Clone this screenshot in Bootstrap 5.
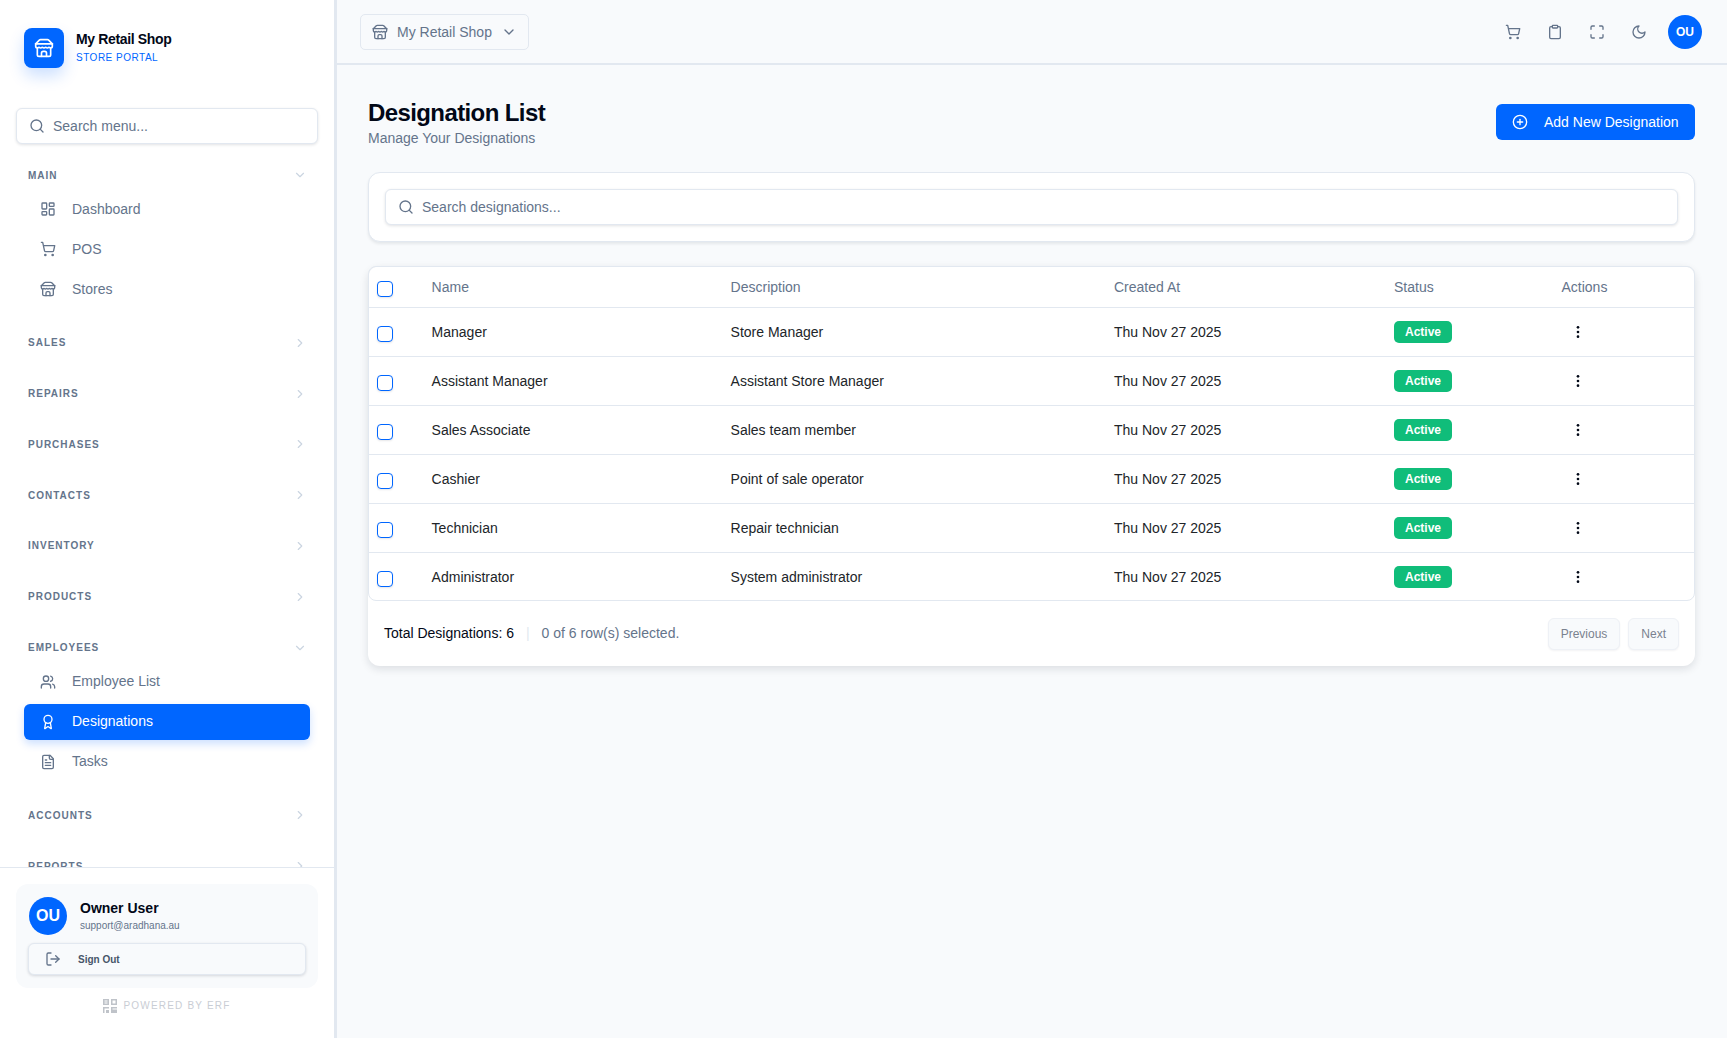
<!DOCTYPE html>
<html lang="en">
<head>
<meta charset="UTF-8">
<meta name="viewport" content="width=device-width, initial-scale=1">
<title>Designation List</title>
<link href="https://cdn.jsdelivr.net/npm/bootstrap@5.3.3/dist/css/bootstrap.min.css" rel="stylesheet">
<style>
  body { background: #f8fafc; color: #020817; font-family: "Liberation Sans", Arial, sans-serif; font-size: 14px; overflow: hidden; }
  .ico { width: 16px; height: 16px; fill: none; stroke: currentColor; stroke-width: 2; stroke-linecap: round; stroke-linejoin: round; flex-shrink: 0; }

  /* sidebar */
  .side-panel { width: 337px; height: 100vh; background: #fff; border-right: 3px solid #e2e8f0; flex-shrink: 0; }
  .brand-box { padding: 28px 24px 0; flex-shrink: 0; }
  .brand-logo { width: 40px; height: 40px; border-radius: 8px; background: #0066ff; color: #fff; box-shadow: 0 8px 16px rgba(0,102,255,.2); }
  .brand-logo .ico { width: 20px; height: 20px; }
  .brand-name { font-size: 14px; font-weight: 700; line-height: 18px; letter-spacing: -.35px; color: #020817; margin-top: -1px; }
  .brand-tag { font-size: 10px; letter-spacing: .5px; color: #0066ff; line-height: 14px; margin-top: 3px; }
  .side-search { margin: 40px 16px 0; height: 36px; flex-shrink: 0; }
  .field-box { border: 1px solid #e2e8f0; border-radius: 6px; background: #fff; box-shadow: 0 1px 3px rgba(15,23,42,.12); color: #64748b; padding-left: 12px; gap: 8px; }
  .field-box input { border: 0; outline: 0; background: transparent; font-size: 14px; width: 100%; color: #020817; padding: 0; }
  .field-box input::placeholder { color: #64748b; opacity: 1; }
  .side-nav { overflow: hidden; padding-top: 21px; min-height: 0; }
  .side-group { padding-bottom: 25.8px; }
  .side-head { height: 20px; margin-bottom: 5px; padding: 0 27px 0 28px; font-size: 10px; font-weight: 700; letter-spacing: 1px; color: #64748b; }
  .side-head .ico { width: 14px; height: 14px; color: #cbd5e1; }
  .side-list { padding-top: 1px; gap: 4px; }
  .side-item { height: 36px; margin: 0 24px; padding-left: 16px; gap: 16px; border-radius: 6px; color: #64748b; font-size: 14px; text-decoration: none; }
  .side-item.is-on { background: #0066ff; color: #fff; box-shadow: 0 4px 8px rgba(0,102,255,.2); }
  .side-foot { border-top: 1px solid #e2e8f0; padding: 16px 16px 0; height: 171px; flex-shrink: 0; }
  .user-card { background: #f8fafc; border-radius: 12px; padding: 13px 12px 12px; height: 104px; }
  .user-pic { width: 38px; height: 38px; border-radius: 50%; background: #0066ff; color: #fff; font-weight: 700; font-size: 16px; flex-shrink: 0; margin-left: 1px; margin-right: 1px; }
  .user-name { font-size: 14px; font-weight: 700; line-height: 18px; }
  .user-mail { font-size: 10px; color: #64748b; line-height: 14px; margin-top: 2px; }
  .sign-btn { height: 32px; margin-top: 8px; padding: 0 0 0 16px; gap: 17px; width: 100%; font-size: 10px; font-weight: 700; color: #475569; background: #f8fafc; border: 1px solid #e2e8f0; border-radius: 6px; box-shadow: 0 1px 3px rgba(15,23,42,.15); }
  .sign-btn .ico { color: #64748b; }
  .powered { margin-top: 10px; font-size: 10px; letter-spacing: 1.2px; color: #c9cdd4; gap: 6px; }

  /* top bar */
  .top-bar { height: 65px; border-bottom: 2px solid #e2e8f0; padding: 0 25px 0 23px; flex-shrink: 0; }
  .shop-pick { height: 36px; width: 169px; padding: 0 13px 0 11px; gap: 9px; color: #64748b; background: #f8fafc; border: 1px solid #e2e8f0; border-radius: 5px; font-size: 14px; white-space: nowrap; }
  .shop-pick span { margin-top: 2px; }
  .top-icons { gap: 26px; color: #64748b; }
  .top-pic { width: 34px; height: 34px; border-radius: 50%; background: #0066ff; color: #fff; font-size: 12px; font-weight: 700; margin-left: -5px; }

  /* page */
  .page-wrap { padding: 35px 32px 0 31px; }
  .page-title { font-size: 24px; font-weight: 700; line-height: 28px; letter-spacing: -.6px; margin: -1px 0 0; color: #020817; }
  .page-sub { color: #64748b; font-size: 14px; line-height: 18px; margin-top: 2px; }
  .add-btn { width: 199px; height: 36px; padding: 0 0 0 16px; gap: 16px; background: #0066ff; border: 0; border-radius: 6px; font-size: 14px; color: #fff; margin-top: 4px; }
  .add-btn .ico { width: 16px; height: 16px; }
  .box-card { background: #fff; border: 1px solid #e2e8f0; border-radius: 12px; box-shadow: 0 2px 3px rgba(15,23,42,.08); }
  .filter-card { height: 70px; margin-top: 25px; padding: 16px; }
  .filter-card .field-box { height: 36px; }
  .list-card { margin-top: 24px; height: 400px; box-shadow: 0 3px 8px rgba(15,23,42,.12); border: 0; }
  .tbl-shell { border: 1px solid #e2e8f0; border-radius: 8px; overflow: hidden; height: 335px; }
  .tbl-main { table-layout: fixed; width: 100%; margin: 0; --bs-table-bg: transparent; }
  .tbl-main th, .tbl-main td { padding: 0 8px; vertical-align: middle; border-bottom: 1px solid #e2e8f0; font-size: 14px; height: 49px; }
  .tbl-main tr:last-child td { border-bottom: 0; }
  .tbl-main th { font-weight: 400; color: #64748b; height: 40px; }
  .tbl-main th:nth-child(n+2), .tbl-main td:nth-child(-n+4):nth-child(n+2) { padding-top: 2px; }
  .tick-box.form-check-input { width: 16px; height: 16px; margin: 5px 0 0; border: 1px solid #0066ff; border-radius: 4px; box-shadow: 0 1px 2px rgba(15,23,42,.1); display: block; }
  .state-tag { display: flex; align-items: center; justify-content: center; width: 58px; height: 22px; background: #10bd7a; color: #fff; font-size: 12px; font-weight: 700; border-radius: 5px; }
  .more-ico { width: 16px; height: 16px; margin-left: 9px; fill: #020817; display: block; }
  .tbl-foot { height: 65px; padding: 0 16px 0 16px; }
  .sep-bar { color: #e2e8f0; margin: 0 12px; }
  .muted-txt { color: #64748b; }
  .page-btn { height: 32px; padding: 0 12px; font-size: 12px; color: #7a828f; background: #f8fafc; border: 1px solid #eef1f6; border-radius: 6px; box-shadow: 0 1px 2px rgba(15,23,42,.05); }
</style>
</head>
<body>

<svg width="0" height="0" class="position-absolute">
  <symbol id="i-store" viewBox="0 0 24 24"><path d="m2 7 4.41-4.41A2 2 0 0 1 7.83 2h8.34a2 2 0 0 1 1.42.59L22 7"/><path d="M4 12v8a2 2 0 0 0 2 2h12a2 2 0 0 0 2-2v-8"/><path d="M15 22v-4a2 2 0 0 0-2-2h-2a2 2 0 0 0-2 2v4"/><path d="M2 7h20"/><path d="M22 7v3a2 2 0 0 1-2 2a2.7 2.7 0 0 1-1.59-.63.7.7 0 0 0-.82 0A2.7 2.7 0 0 1 16 12a2.7 2.7 0 0 1-1.59-.63.7.7 0 0 0-.82 0A2.7 2.7 0 0 1 12 12a2.7 2.7 0 0 1-1.59-.63.7.7 0 0 0-.82 0A2.7 2.7 0 0 1 8 12a2.7 2.7 0 0 1-1.59-.63.7.7 0 0 0-.82 0A2.7 2.7 0 0 1 4 12a2 2 0 0 1-2-2V7"/></symbol>
  <symbol id="i-search" viewBox="0 0 24 24"><circle cx="11" cy="11" r="8"/><path d="m21 21-4.3-4.3"/></symbol>
  <symbol id="i-down" viewBox="0 0 24 24"><path d="m6 9 6 6 6-6"/></symbol>
  <symbol id="i-right" viewBox="0 0 24 24"><path d="m9 18 6-6-6-6"/></symbol>
  <symbol id="i-dash" viewBox="0 0 24 24"><rect x="3" y="3" width="7" height="9" rx="1"/><rect x="14" y="3" width="7" height="5" rx="1"/><rect x="14" y="12" width="7" height="9" rx="1"/><rect x="3" y="16" width="7" height="5" rx="1"/></symbol>
  <symbol id="i-cart" viewBox="0 0 24 24"><circle cx="8" cy="21" r="1"/><circle cx="19" cy="21" r="1"/><path d="M2.05 2.05h2l2.66 12.42a2 2 0 0 0 2 1.58h9.78a2 2 0 0 0 1.95-1.57l1.65-7.43H5.12"/></symbol>
  <symbol id="i-users" viewBox="0 0 24 24"><path d="M16 21v-2a4 4 0 0 0-4-4H6a4 4 0 0 0-4 4v2"/><circle cx="9" cy="7" r="4"/><path d="M22 21v-2a4 4 0 0 0-3-3.87"/><path d="M16 3.13a4 4 0 0 1 0 7.75"/></symbol>
  <symbol id="i-award" viewBox="0 0 24 24"><path d="m15.477 12.89 1.515 8.526a.5.5 0 0 1-.81.47l-3.58-2.687a1 1 0 0 0-1.197 0l-3.586 2.686a.5.5 0 0 1-.81-.469l1.514-8.526"/><circle cx="12" cy="8" r="6"/></symbol>
  <symbol id="i-file" viewBox="0 0 24 24"><path d="M15 2H6a2 2 0 0 0-2 2v16a2 2 0 0 0 2 2h12a2 2 0 0 0 2-2V7Z"/><path d="M14 2v4a2 2 0 0 0 2 2h4"/><path d="M10 9H8"/><path d="M16 13H8"/><path d="M16 17H8"/></symbol>
  <symbol id="i-logout" viewBox="0 0 24 24"><path d="M9 21H5a2 2 0 0 1-2-2V5a2 2 0 0 1 2-2h4"/><path d="m16 17 5-5-5-5"/><path d="M21 12H9"/></symbol>
  <symbol id="i-clip" viewBox="0 0 24 24"><rect x="8" y="2" width="8" height="4" rx="1"/><path d="M16 4h2a2 2 0 0 1 2 2v14a2 2 0 0 1-2 2H6a2 2 0 0 1-2-2V6a2 2 0 0 1 2-2h2"/></symbol>
  <symbol id="i-max" viewBox="0 0 24 24"><path d="M8 3H5a2 2 0 0 0-2 2v3"/><path d="M21 8V5a2 2 0 0 0-2-2h-3"/><path d="M3 16v3a2 2 0 0 0 2 2h3"/><path d="M16 21h3a2 2 0 0 0 2-2v-3"/></symbol>
  <symbol id="i-moon" viewBox="0 0 24 24"><path d="M12 3a6 6 0 0 0 9 9 9 9 0 1 1-9-9Z"/></symbol>
  <symbol id="i-plus" viewBox="0 0 24 24"><circle cx="12" cy="12" r="10"/><path d="M8 12h8"/><path d="M12 8v8"/></symbol>
</svg>

<div class="d-flex">
  <aside class="side-panel d-flex flex-column">
    <div class="brand-box d-flex align-items-center gap-2">
      <div class="brand-logo d-flex align-items-center justify-content-center"><svg class="ico"><use href="#i-store"/></svg></div>
      <div class="ms-1">
        <div class="brand-name">My Retail Shop</div>
        <div class="brand-tag">STORE PORTAL</div>
      </div>
    </div>
    <div class="side-search field-box d-flex align-items-center">
      <svg class="ico"><use href="#i-search"/></svg>
      <input type="text" placeholder="Search menu...">
    </div>

    <nav class="side-nav flex-grow-1">
      <div class="side-group">
        <div class="side-head d-flex align-items-center justify-content-between">MAIN<svg class="ico"><use href="#i-down"/></svg></div>
        <div class="side-list d-flex flex-column">
          <a class="side-item d-flex align-items-center" href="#"><svg class="ico"><use href="#i-dash"/></svg>Dashboard</a>
          <a class="side-item d-flex align-items-center" href="#"><svg class="ico"><use href="#i-cart"/></svg>POS</a>
          <a class="side-item d-flex align-items-center" href="#"><svg class="ico"><use href="#i-store"/></svg>Stores</a>
        </div>
      </div>
      <div class="side-group"><div class="side-head d-flex align-items-center justify-content-between">SALES<svg class="ico"><use href="#i-right"/></svg></div></div>
      <div class="side-group"><div class="side-head d-flex align-items-center justify-content-between">REPAIRS<svg class="ico"><use href="#i-right"/></svg></div></div>
      <div class="side-group"><div class="side-head d-flex align-items-center justify-content-between">PURCHASES<svg class="ico"><use href="#i-right"/></svg></div></div>
      <div class="side-group"><div class="side-head d-flex align-items-center justify-content-between">CONTACTS<svg class="ico"><use href="#i-right"/></svg></div></div>
      <div class="side-group"><div class="side-head d-flex align-items-center justify-content-between">INVENTORY<svg class="ico"><use href="#i-right"/></svg></div></div>
      <div class="side-group"><div class="side-head d-flex align-items-center justify-content-between">PRODUCTS<svg class="ico"><use href="#i-right"/></svg></div></div>
      <div class="side-group">
        <div class="side-head d-flex align-items-center justify-content-between">EMPLOYEES<svg class="ico"><use href="#i-down"/></svg></div>
        <div class="side-list d-flex flex-column">
          <a class="side-item d-flex align-items-center" href="#"><svg class="ico"><use href="#i-users"/></svg>Employee List</a>
          <a class="side-item is-on d-flex align-items-center" href="#"><svg class="ico"><use href="#i-award"/></svg>Designations</a>
          <a class="side-item d-flex align-items-center" href="#"><svg class="ico"><use href="#i-file"/></svg>Tasks</a>
        </div>
      </div>
      <div class="side-group"><div class="side-head d-flex align-items-center justify-content-between">ACCOUNTS<svg class="ico"><use href="#i-right"/></svg></div></div>
      <div class="side-group"><div class="side-head d-flex align-items-center justify-content-between">REPORTS<svg class="ico"><use href="#i-right"/></svg></div></div>
    </nav>

    <div class="side-foot">
      <div class="user-card">
        <div class="d-flex align-items-center gap-2">
          <div class="user-pic d-flex align-items-center justify-content-center">OU</div>
          <div class="ms-1">
            <div class="user-name">Owner User</div>
            <div class="user-mail">support@aradhana.au</div>
          </div>
        </div>
        <button class="sign-btn d-flex align-items-center" type="button"><svg class="ico"><use href="#i-logout"/></svg>Sign Out</button>
      </div>
      <div class="powered d-flex align-items-center justify-content-center">
        <svg width="14" height="14" viewBox="0 0 14 14" fill="#bfc3c9"><path fill-rule="evenodd" d="M0 0h6v6H0zM1.5 1.5v1h3v-1zM1.5 3.5v1h3v-1zM8 0h6v6H8zM9.5 1.5v3h3v-3zM0 8h6v1.5H1.5V14H0zM3 11h3v3H3zM8 8h6v1.5H9.5v1h4.5V14H8z"/></svg>
        POWERED BY ERF
      </div>
    </div>
  </aside>

  <main class="flex-grow-1 d-flex flex-column" style="min-width:0">
    <header class="top-bar d-flex align-items-center justify-content-between">
      <button class="shop-pick d-flex align-items-center" type="button">
        <svg class="ico"><use href="#i-store"/></svg><span class="flex-grow-1 text-start">My Retail Shop</span><svg class="ico"><use href="#i-down"/></svg>
      </button>
      <div class="top-icons d-flex align-items-center">
        <svg class="ico"><use href="#i-cart"/></svg>
        <svg class="ico"><use href="#i-clip"/></svg>
        <svg class="ico"><use href="#i-max"/></svg>
        <svg class="ico"><use href="#i-moon"/></svg>
        <div class="top-pic d-flex align-items-center justify-content-center">OU</div>
      </div>
    </header>

    <div class="page-wrap">
      <div class="d-flex justify-content-between align-items-start">
        <div>
          <h1 class="page-title">Designation List</h1>
          <div class="page-sub">Manage Your Designations</div>
        </div>
        <button class="add-btn d-flex align-items-center" type="button"><svg class="ico"><use href="#i-plus"/></svg>Add New Designation</button>
      </div>

      <div class="box-card filter-card">
        <div class="field-box d-flex align-items-center">
          <svg class="ico"><use href="#i-search"/></svg>
          <input type="text" placeholder="Search designations...">
        </div>
      </div>

      <div class="box-card list-card">
        <div class="tbl-shell">
          <table class="table tbl-main">
            <colgroup><col style="width:54.6px"><col style="width:299px"><col style="width:383.4px"><col style="width:280px"><col style="width:167.5px"><col></colgroup>
            <thead>
              <tr><th><input class="form-check-input tick-box" type="checkbox"></th><th>Name</th><th>Description</th><th>Created At</th><th>Status</th><th>Actions</th></tr>
            </thead>
            <tbody id="rows"></tbody>
          </table>
        </div>
        <div class="tbl-foot d-flex align-items-center justify-content-between">
          <div>Total Designations: 6<span class="sep-bar">|</span><span class="muted-txt">0 of 6 row(s) selected.</span></div>
          <div class="d-flex gap-2">
            <button class="page-btn" type="button">Previous</button>
            <button class="page-btn" type="button">Next</button>
          </div>
        </div>
      </div>
    </div>
  </main>
</div>

<script src="https://cdn.jsdelivr.net/npm/bootstrap@5.3.3/dist/js/bootstrap.bundle.min.js"></script>
<script>
  const designations = [
    ["Manager", "Store Manager"],
    ["Assistant Manager", "Assistant Store Manager"],
    ["Sales Associate", "Sales team member"],
    ["Cashier", "Point of sale operator"],
    ["Technician", "Repair technician"],
    ["Administrator", "System administrator"]
  ];
  document.getElementById("rows").innerHTML = designations.map(d => `
    <tr>
      <td><input class="form-check-input tick-box" type="checkbox"></td>
      <td>${d[0]}</td>
      <td>${d[1]}</td>
      <td>Thu Nov 27 2025</td>
      <td><span class="state-tag">Active</span></td>
      <td><svg class="more-ico" viewBox="0 0 24 24"><circle cx="12" cy="5" r="2"/><circle cx="12" cy="12" r="2"/><circle cx="12" cy="19" r="2"/></svg></td>
    </tr>`).join("");
</script>
</body>
</html>
